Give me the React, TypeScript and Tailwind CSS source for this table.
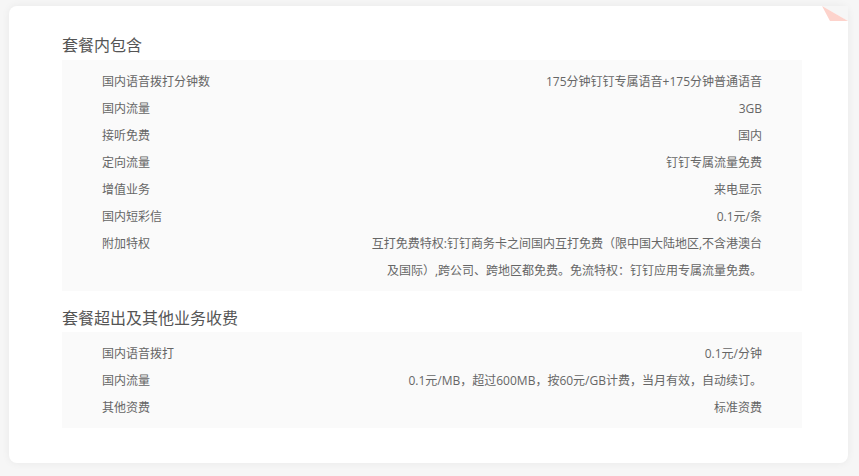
const included: [string, string | string[]][] = [
  ["国内语音拨打分钟数", "175分钟钉钉专属语音+175分钟普通语音"],
  ["国内流量", "3GB"],
  ["接听免费", "国内"],
  ["定向流量", "钉钉专属流量免费"],
  ["增值业务", "来电显示"],
  ["国内短彩信", "0.1元/条"],
  [
    "附加特权",
    [
      "互打免费特权:钉钉商务卡之间国内互打免费（限中国大陆地区,不含港澳台",
      "及国际）,跨公司、跨地区都免费。免流特权：钉钉应用专属流量免费。",
    ],
  ],
];

const extra: [string, string][] = [
  ["国内语音拨打", "0.1元/分钟"],
  ["国内流量", "0.1元/MB，超过600MB，按60元/GB计费，当月有效，自动续订。"],
  ["其他资费", "标准资费"],
];

function Row({ label, value }: { label: string; value: string | string[] }) {
  const lines = Array.isArray(value) ? value : [value];
  return (
    <div className="flex justify-between">
      <span className="leading-[27px] whitespace-nowrap">{label}</span>
      <div className="text-right">
        {lines.map((line, i) => (
          <div key={i} className="leading-[27px] whitespace-nowrap">
            {line}
          </div>
        ))}
      </div>
    </div>
  );
}

function Section({ title, rows, first }: { title: string; rows: [string, string | string[]][]; first?: boolean }) {
  return (
    <div className={first ? "" : "mt-[13px]"}>
      <h2 className={first ? "text-[16px] leading-[29px] text-[#555] font-normal" : "text-[16px] leading-[28px] text-[#555] font-normal"}>
        {title}
      </h2>
      <div className="bg-[#fafafa] px-10 py-[7.5px] text-[12px] text-[#666]">
        {rows.map(([label, value]) => (
          <Row key={label} label={label} value={value} />
        ))}
      </div>
    </div>
  );
}

export default function App() {
  return (
    <div
      className="min-h-[476px] bg-[#f6f6f6] pt-[6px] pl-[9px] pr-[11px] pb-[12px]"
      style={{ fontFamily: '"Open Sans", "Noto Sans CJK SC", sans-serif' }}
    >
      <div className="relative bg-white rounded-lg shadow-[0_0_8px_rgba(0,0,0,0.06)] pt-[25px] pl-[53px] pr-[46px] pb-[35px]">
        <svg className="absolute right-0 top-0" width="26" height="15" viewBox="0 0 26 15">
          <polygon points="0,0 26,0 26,15" fill="#f6f6f6" />
          <polygon points="0,0 26,15 8,15" fill="#fdd3cc" />
        </svg>
        <Section title="套餐内包含" rows={included} first />
        <Section title="套餐超出及其他业务收费" rows={extra} />
      </div>
    </div>
  );
}
